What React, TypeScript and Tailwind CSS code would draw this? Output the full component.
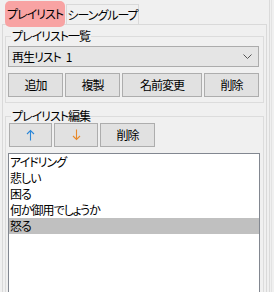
import type React from 'react';

const items = ['アイドリング', '悲しい', '困る', '何か御用でしょうか', '怒る'];
const selectedIndex = 4;

const Btn: React.FC<{ className?: string; children: React.ReactNode }> = ({
    className = '',
    children,
}) => (
    <button
        className={`flex items-center justify-center border border-[#adadad] bg-[#e1e1e1] leading-none whitespace-nowrap text-black ${className}`}
    >
        {children}
    </button>
);

const Arrow: React.FC<{ up?: boolean; color: string }> = ({ up, color }) => (
    <svg
        width="9"
        height="12"
        viewBox="0 0 9 12"
        className={up ? '' : 'rotate-180'}
    >
        <path
            d="M4.5 1.5 V11.5 M1 5 L4.5 1.5 L8 5"
            fill="none"
            stroke={color}
            strokeWidth="1.1"
        />
    </svg>
);

export default function App() {
    return (
        <div className="flex h-[292px] w-[274px] overflow-hidden bg-[#f0f0f0] font-['Noto_Sans_CJK_JP',sans-serif] text-[12px] tracking-[-1px] whitespace-nowrap text-black [font-feature-settings:'palt']">
            <div className="w-[268px] shrink-0">
                {/* tabs */}
                <div className="flex h-[24px] items-start pl-[5px]">
                    <div className="relative z-10 mt-[1px] flex h-[26px] w-[60px] items-center justify-center rounded-[5px] bg-[#f8a3a3] leading-none">
                        プレイリスト
                    </div>
                    <div className="mt-[4px] ml-[1px] flex h-[20px] w-[73px] items-center justify-center border border-b-0 border-[#d9d9d9] leading-none">
                        シーングループ
                    </div>
                </div>
                {/* panel */}
                <div className="ml-[2px] h-[280px] w-[265px] border border-[#d9d9d9] px-[2px]">
                    {/* playlist list group */}
                    <div className="relative mt-[11px] border border-[#dcdcdc] pt-[9px] pr-[4px] pb-[5px] pl-[2px]">
                        <span className="absolute -top-[8px] left-[5px] bg-[#f0f0f0] px-[1px] leading-[14px]">
                            プレイリスト一覧
                        </span>
                        <div className="flex h-[21px] items-center justify-between border border-[#acacac] bg-[#e5e5e5] pr-[6px] pl-[3px] leading-none">
                            <span>
                                再生リスト<span className="ml-[5px]">1</span>
                            </span>
                            <svg width="9" height="6" viewBox="0 0 9 6">
                                <polyline
                                    points="0.5,0.5 4.5,4.5 8.5,0.5"
                                    fill="none"
                                    stroke="#555"
                                    strokeWidth="1"
                                />
                            </svg>
                        </div>
                        <div className="mt-[6px] flex h-[24px]">
                            <Btn className="w-[55px]">追加</Btn>
                            <Btn className="ml-[2px] w-[55px]">複製</Btn>
                            <Btn className="ml-[2px] w-[80px]">名前変更</Btn>
                            <Btn className="ml-[2px] w-[55px]">削除</Btn>
                        </div>
                    </div>
                    {/* playlist edit group */}
                    <div className="relative mt-[13px] h-[200px] border border-[#dcdcdc] pt-[6px] pr-[3px] pl-[2px]">
                        <span className="absolute -top-[8px] left-[5px] bg-[#f0f0f0] px-[1px] leading-[14px]">
                            プレイリスト編集
                        </span>
                        <div className="flex h-[24px] pl-[1px]">
                            <Btn className="w-[43px]">
                                <Arrow up color="#2a86d8" />
                            </Btn>
                            <Btn className="ml-[2px] w-[44px]">
                                <Arrow color="#e8892a" />
                            </Btn>
                            <Btn className="ml-[2px] w-[55px]">削除</Btn>
                        </div>
                        <div className="mt-[6px] h-[160px] border border-[#828790] bg-white">
                            <ul>
                                {items.map((item, i) => (
                                    <li
                                        key={item}
                                        className={`flex h-[16px] items-center pl-[1px] leading-none ${
                                            i === selectedIndex ? 'bg-[#c0c0c0]' : ''
                                        }`}
                                    >
                                        {item}
                                    </li>
                                ))}
                            </ul>
                        </div>
                    </div>
                </div>
            </div>
            {/* splitter edge */}
            <div className="ml-[1px] h-full w-[2px] border-l border-[#dadada]" />
            <div className="h-full w-[3px] border-l border-[#e3e3e3]" />
        </div>
    );
}
